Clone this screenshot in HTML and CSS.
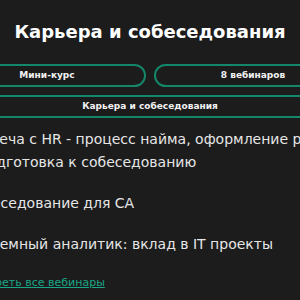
FILE: index.html
```html
<!DOCTYPE html>
<html lang="ru">
<head>
    <meta charset="UTF-8">
    <meta name="viewport" content="width=device-width, initial-scale=1.0">
    <title>Карьера и собеседования</title>
    <link rel="stylesheet" href="styles.css">
</head>
<body>
    <div class="course">
        <h1 class="course-title">Карьера и собеседования</h1>
        <div class="tags">
            <div class="tag">Мини-курс</div>
            <div class="tag">8 вебинаров</div>
            <div class="tag tag-wide">Карьера и собеседования</div>
        </div>
        <ul class="webinars">
            <li>Встреча с HR - процесс найма, оформление резюме и подготовка к собеседованию</li>
            <li>Собеседование для СА</li>
            <li>Системный аналитик: вклад в IT проекты</li>
        </ul>
        <a class="all-link" href="#">Смотреть все вебинары</a>
    </div>
</body>
</html>
```

FILE: styles.css
```css
body {
    margin: 0;
    background: #1c1c1c;
    color: #ffffff;
    font-family: 'DejaVu Sans', sans-serif;
    display: flex;
    justify-content: center;
    overflow: hidden;
}
.course {
    width: 404px;
    flex-shrink: 0;
    padding-top: 20px;
}
.course-title {
    margin: 0 0 20px;
    text-align: center;
    font-size: 18px;
    line-height: 24px;
    font-weight: bold;
}
.tags {
    display: grid;
    grid-template-columns: 1fr 1fr;
    gap: 8px;
}
.tag {
    border: 2px solid #14866a;
    border-radius: 12px;
    height: 19px;
    line-height: 19px;
    text-align: center;
    font-size: 9px;
    font-weight: bold;
    color: #f2f2f2;
}
.tag-wide {
    grid-column: 1 / 3;
}
.webinars {
    list-style: none;
    margin: 10px 0 0;
    padding: 0 0 0 17px;
}
.webinars li {
    font-size: 14px;
    line-height: 23px;
    margin-bottom: 18px;
    color: #e6e6e6;
}
.all-link {
    display: block;
    margin-top: 4px;
    padding-left: 18px;
    font-size: 11px;
    line-height: 18px;
    color: #1aa586;
}
```
